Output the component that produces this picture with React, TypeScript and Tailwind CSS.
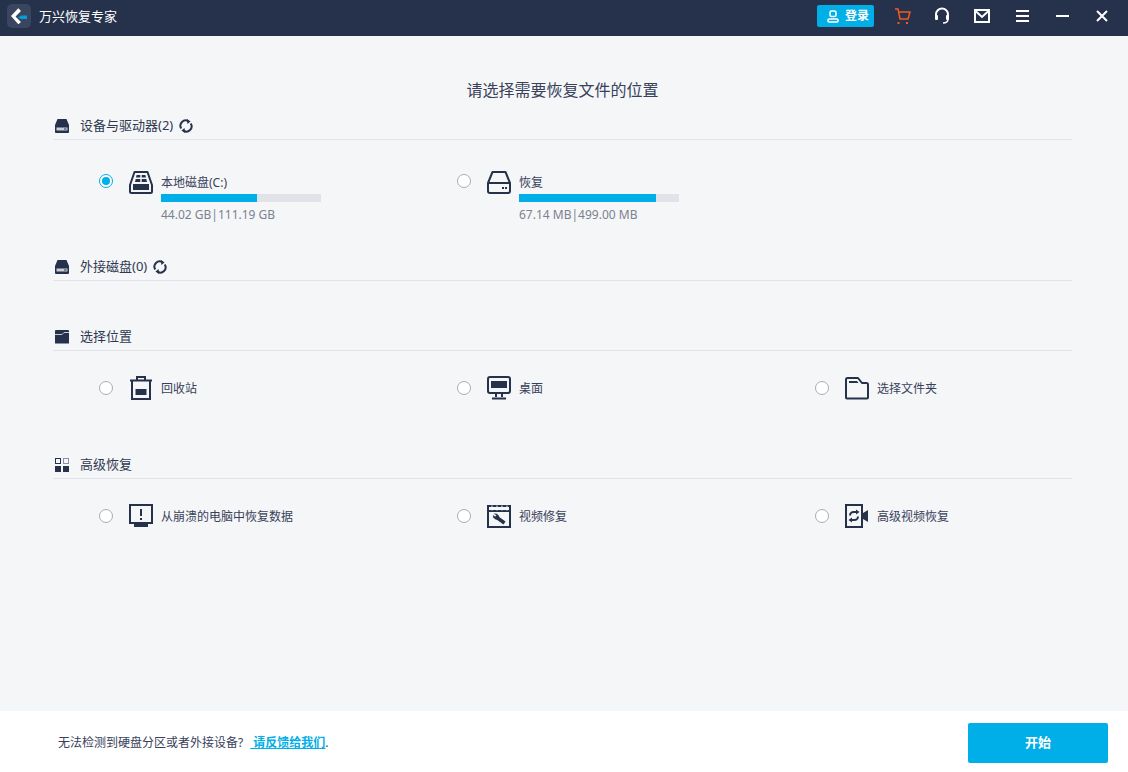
import React from 'react'

const fontCls = "font-['Noto_Sans','Noto_Sans_CJK_SC','Liberation_Sans',sans-serif]"

const Radio = ({ checked }: { checked?: boolean }) =>
  checked ? (
    <span className="flex h-[14px] w-[14px] shrink-0 items-center justify-center rounded-full border border-[#00aee8] bg-white">
      <span className="h-[8px] w-[8px] rounded-full bg-[#00aee8]" />
    </span>
  ) : (
    <span className="h-[14px] w-[14px] shrink-0 rounded-full border border-[#a9acb8] bg-white" />
  )

const Svg = ({ children, size = 24 }: { children: React.ReactNode; size?: number }) => (
  <svg width={size} height={size} viewBox="0 0 24 24" className="shrink-0" fill="none">
    {children}
  </svg>
)

const navy = '#26314c'

const DiskC = () => (
  <Svg>
    <path d="M5.500 2h13L23 15v6.500a1.500 1.500 0 0 1-1.500 1.500h-19A1.500 1.500 0 0 1 1 21.500V15z" stroke={navy} strokeWidth="2" strokeLinejoin="round" />
    <rect x="4" y="14" width="16" height="6" fill={navy} />
    <path d="M7.600 5h3.700v2.600H7zM12.700 5h3.700l.6 2.600h-4.300zM6.700 9h4.600v3H6zM12.700 9h4.600l.7 3h-5.300z" fill={navy} />
  </Svg>
)

const DiskPlain = () => (
  <Svg>
    <path d="M5.500 2h13L23 13v8a2 2 0 0 1-2 2H3a2 2 0 0 1-2-2v-8z" stroke={navy} strokeWidth="2" strokeLinejoin="round" />
    <path d="M1.500 13h21" stroke={navy} strokeWidth="2" />
    <rect x="15" y="17" width="2" height="2" fill={navy} />
    <rect x="18" y="17" width="2" height="2" fill={navy} />
  </Svg>
)

const Trash = () => (
  <Svg>
    <path d="M8 4V1h8v3M1 4.500h22" stroke={navy} strokeWidth="2" />
    <path d="M3 5v18h18V5" stroke={navy} strokeWidth="2" />
    <rect x="6.500" y="13" width="11" height="6" fill={navy} />
  </Svg>
)

const Monitor = () => (
  <Svg>
    <rect x="1" y="1" width="22" height="16" rx="2" stroke={navy} strokeWidth="2" />
    <rect x="4" y="5" width="16" height="7" fill={navy} />
    <path d="M9 18v3M15 18v3" stroke={navy} strokeWidth="2" />
    <path d="M5 22.500h14" stroke={navy} strokeWidth="2" />
  </Svg>
)

const FolderOpen = () => (
  <Svg>
    <path d="M1 3.500a1.500 1.500 0 0 1 1.500-1.500h10.500l4 5h4.500a1.500 1.500 0 0 1 1.500 1.500v13a1 1 0 0 1-1 1H2a1 1 0 0 1-1-1z" stroke={navy} strokeWidth="2" strokeLinejoin="round" />
    <path d="M4 5h8l1.500 2H4z" fill={navy} />
  </Svg>
)

const Crash = () => (
  <Svg>
    <rect x="1" y="1" width="22" height="18" stroke={navy} strokeWidth="2" />
    <rect x="11" y="5" width="2" height="7" fill={navy} />
    <rect x="11" y="14" width="2" height="2" fill={navy} />
    <path d="M5 20h14v3H5z" fill={navy} />
  </Svg>
)

const VideoRepair = () => (
  <Svg>
    <rect x="1" y="2" width="22" height="21" stroke={navy} strokeWidth="2" />
    <path d="M1 7h22" stroke={navy} strokeWidth="2" />
    <path d="M5 1.500v5M10 1.500v5M15 1.500v5M20 1.500v5" stroke="#f5f6f8" strokeWidth="1" />
    <path d="M10.500 14l7 5" stroke={navy} strokeWidth="3.500" />
    <path d="M6.500 9.500l3.300.2 2.400 2.200-.3 3.300-2.900.6-2.700-2 -.5-2.800 2.400 1.500 1.300-1.100z" fill={navy} />
  </Svg>
)

const VideoSync = () => (
  <Svg>
    <rect x="1" y="1" width="16" height="22" stroke={navy} strokeWidth="2" />
    <path d="M18 9l5-3v12l-5-3z" fill={navy} />
    <path d="M5 11.500c0-2.500 2-3.500 3.500-3.500h3.500M13 12.500c0 2.500-2 3.500-3.500 3.500H6" stroke={navy} strokeWidth="2" />
    <path d="M11 5.500l3.500 2.500L11 10.500zM7 13.500L3.500 16 7 18.500z" fill={navy} />
  </Svg>
)

const HddSmall = () => (
  <svg width="14" height="14" viewBox="0 0 14 14" className="shrink-0">
    <path d="M2.500 0h9L14 6v7a1 1 0 0 1-1 1H1a1 1 0 0 1-1-1V6z" fill={navy} />
    <rect x="1.500" y="8.500" width="11" height="3" fill="#c9ccd5" />
    <rect x="9" y="9.500" width="2.500" height="1" fill={navy} />
  </svg>
)

const FolderSmall = () => (
  <svg width="14" height="14" viewBox="0 0 14 14" className="shrink-0">
    <path d="M1 0h12a1 1 0 0 1 1 1v12.500H0V1a1 1 0 0 1 1-1z" fill={navy} />
    <path d="M0 4.500h7l2-2h5" stroke="#c9ccd5" strokeWidth="1" fill="none" />
  </svg>
)

const GridSmall = () => (
  <svg width="14" height="14" viewBox="0 0 14 14" className="shrink-0">
    <rect x="0.500" y="0.500" width="5" height="5" stroke={navy} fill="none" />
    <rect x="8.500" y="0.500" width="5" height="5" stroke="#8a90a0" fill="none" />
    <rect x="0" y="8" width="6" height="6" fill={navy} />
    <rect x="8" y="8" width="6" height="6" fill={navy} />
  </svg>
)

const Refresh = () => (
  <svg width="14" height="14" viewBox="0 0 14 14" fill="none" className="shrink-0">
    <path d="M2.300 9.500A5.200 5.200 0 0 1 9.500 2.300" stroke={navy} strokeWidth="2" />
    <path d="M11.700 4.500A5.200 5.200 0 0 1 4.500 11.700" stroke={navy} strokeWidth="2" />
    <path d="M8 0l3.600 2.600L8.400 5zM6 14l-3.600-2.600L5.600 9z" fill={navy} />
  </svg>
)

const Section = ({
  icon,
  title,
  refresh,
  className,
  children,
}: {
  icon: React.ReactNode
  title: string
  refresh?: boolean
  className: string
  children?: React.ReactNode
}) => (
  <section className={className}>
    <div className="flex h-[27px] items-center border-b border-[#e2e4e9] pl-[2px] text-[13px] text-[#2f3850]">
      <span className="mr-[11px] flex">{icon}</span>
      <span>{title}</span>
      {refresh && (
        <span className="ml-[6px] flex">
          <Refresh />
        </span>
      )}
    </div>
    {children}
  </section>
)

const Item = ({ icon, label }: { icon: React.ReactNode; label: string }) => (
  <div className="flex h-[24px] items-center">
    <Radio />
    <span className="ml-[16px] flex">{icon}</span>
    <span className="ml-[8px] pt-[1px] text-[12px] leading-[24px] text-[#39415a]">{label}</span>
  </div>
)

const Drive = ({
  icon,
  label,
  size,
  percent,
  checked,
}: {
  icon: React.ReactNode
  label: string
  size: string
  percent: number
  checked?: boolean
}) => (
  <div className="flex items-start">
    <span className="mt-[4px] flex">
      <Radio checked={checked} />
    </span>
    <span className="ml-[16px] flex">{icon}</span>
    <div className="ml-[8px] w-[160px]">
      <div className="h-[24px] pt-[1px] text-[12px] leading-[24px] text-[#39415a]">{label}</div>
      <div className="h-[8px] bg-[#e1e3e8]">
        <div className="h-full bg-[#00aee8]" style={{ width: `${percent}%` }} />
      </div>
      <div className="mt-[5px] text-[12px] leading-[16px] text-[#7c8190]">{size}</div>
    </div>
  </div>
)

const App = () => (
  <div className={`flex h-[772px] w-[1128px] flex-col overflow-hidden bg-[#f5f6f8] ${fontCls}`}>
    <header className="flex h-[36px] shrink-0 items-center bg-[#26314c] pb-[4px]">
      <div className="ml-[7px] flex h-[24px] w-[24px] items-center justify-center rounded-[5px] bg-[#3a4560]">
        <svg width="16" height="17" viewBox="0 0 16 17">
          <path d="M0 8L7.300 .3 10 3 4.500 8.500 10 14l-2.700 2.300z" fill="#fff" />
          <path d="M7 9.500L10 7.500h6V11h-6z" fill="#00a0d8" />
        </svg>
      </div>
      <span className="ml-[8px] translate-y-[1px] text-[13px] text-white">万兴恢复专家</span>
      <div className="ml-auto flex h-[22px] w-[57px] items-center rounded-[2px] bg-[#00aee8] pl-[10px] text-[12px] font-bold text-white">
        <svg width="12" height="13" viewBox="0 0 12 13" fill="none" className="shrink-0">
          <rect x="3" y="1" width="6" height="5.500" rx="1.500" stroke="#fff" strokeWidth="1.500" />
          <rect x="1" y="9" width="10" height="3" rx="1" stroke="#fff" strokeWidth="1.500" />
        </svg>
        <span className="ml-[6px]">登录</span>
      </div>
      <svg width="16" height="16" viewBox="0 0 16 16" fill="none" className="ml-[21px] shrink-0">
        <path d="M0 1h3l2 10h8l2-7H4" stroke="#f25a1f" strokeWidth="1.500" />
        <rect x="2.500" y="14" width="2" height="2" fill="#f25a1f" />
        <rect x="11" y="14" width="2" height="2" fill="#f25a1f" />
      </svg>
      <svg width="16" height="18" viewBox="0 0 16 18" fill="none" className="ml-[23px] shrink-0">
        <path d="M2 9V7.500a6 6 0 0 1 12 0V9" stroke="#fff" strokeWidth="2" />
        <rect x="1" y="8" width="3" height="5" rx="1" fill="#fff" />
        <rect x="12" y="8" width="3" height="5" rx="1" fill="#fff" />
        <path d="M14 12c0 3-2 4-5 4" stroke="#fff" strokeWidth="1.500" />
      </svg>
      <svg width="16" height="14" viewBox="0 0 16 14" fill="none" className="ml-[24px] shrink-0">
        <rect x="1" y="1" width="14" height="12" stroke="#fff" strokeWidth="2" />
        <path d="M1.500 2L8 8l6.500-6" stroke="#fff" strokeWidth="2" />
      </svg>
      <svg width="13" height="12" viewBox="0 0 13 12" fill="none" className="ml-[26px] shrink-0">
        <path d="M0 1h13M0 6h13M0 11h13" stroke="#fff" strokeWidth="2" />
      </svg>
      <div className="ml-[27px] h-[2px] w-[13px] shrink-0 bg-white" />
      <svg width="12" height="12" viewBox="0 0 12 12" fill="none" className="ml-[27px] mr-[20px] shrink-0">
        <path d="M1 1l10 10M11 1L1 11" stroke="#fff" strokeWidth="2" />
      </svg>
    </header>

    <main className="flex-1 pl-[53px] pr-[56px]">
      <h1 className="mt-[43px] h-[34px] text-center text-[16px] font-normal leading-[22px] text-[#39415a]">
        请选择需要恢复文件的位置
      </h1>

      <Section icon={<HddSmall />} title="设备与驱动器(2)" refresh className="h-[141px]">
        <div className="grid grid-cols-[358px_358px_1fr] pl-[46px] pt-[30px]">
          <Drive icon={<DiskC />} label="本地磁盘(C:)" size="44.02 GB|111.19 GB" percent={60} checked />
          <Drive icon={<DiskPlain />} label="恢复" size="67.14 MB|499.00 MB" percent={85.500} />
        </div>
      </Section>

      <Section icon={<HddSmall />} title="外接磁盘(0)" refresh className="h-[70px]" />

      <Section icon={<FolderSmall />} title="选择位置" className="h-[128px]">
        <div className="grid grid-cols-[358px_358px_1fr] pl-[46px] pt-[25px]">
          <Item icon={<Trash />} label="回收站" />
          <Item icon={<Monitor />} label="桌面" />
          <Item icon={<FolderOpen />} label="选择文件夹" />
        </div>
      </Section>

      <Section icon={<GridSmall />} title="高级恢复" className="h-[100px]">
        <div className="grid grid-cols-[358px_358px_1fr] pl-[46px] pt-[25px]">
          <Item icon={<Crash />} label="从崩溃的电脑中恢复数据" />
          <Item icon={<VideoRepair />} label="视频修复" />
          <Item icon={<VideoSync />} label="高级视频恢复" />
        </div>
      </Section>
    </main>

    <footer className="flex h-[61px] shrink-0 items-center justify-between bg-white pl-[58px] pr-[20px]">
      <p className="mt-[2px] text-[12px] text-[#39415a]">
        无法检测到硬盘分区或者外接设备?
        <a className="ml-[7px] font-bold text-[#00aee8] underline">&nbsp;请反馈给我们</a>.
      </p>
      <button className="mt-[2px] h-[40px] w-[140px] rounded-[2px] bg-[#00aee8] text-[13px] font-bold text-white">开始</button>
    </footer>
  </div>
)

export default App
